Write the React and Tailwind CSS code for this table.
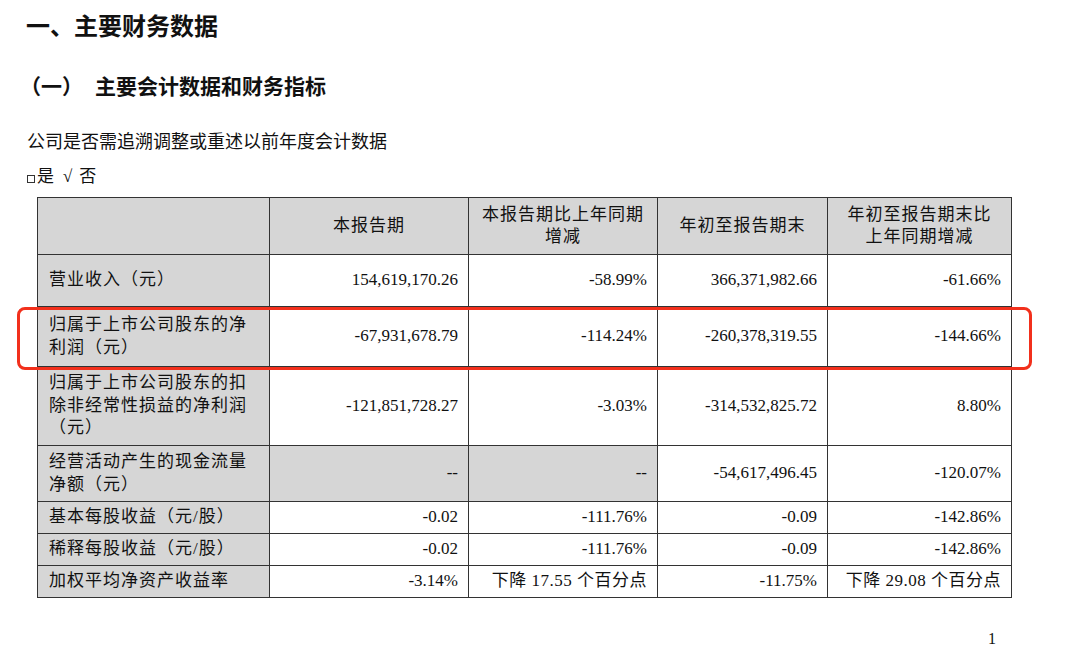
const rows = [
  { label: ['营业收入（元）'], h: 'h-[52px]', vals: ['154,619,170.26', '-58.99%', '366,371,982.66', '-61.66%'] },
  { label: ['归属于上市公司股东的净', '利润（元）'], h: 'h-[60px]', vals: ['-67,931,678.79', '-114.24%', '-260,378,319.55', '-144.66%'] },
  { label: ['归属于上市公司股东的扣', '除非经常性损益的净利润', '（元）'], h: 'h-[79px]', vals: ['-121,851,728.27', '-3.03%', '-314,532,825.72', '8.80%'] },
  { label: ['经营活动产生的现金流量', '净额（元）'], h: 'h-[56px]', vals: ['--', '--', '-54,617,496.45', '-120.07%'], grey: [true, true, false, false] },
  { label: ['基本每股收益（元/股）'], h: 'h-[32px]', vals: ['-0.02', '-111.76%', '-0.09', '-142.86%'] },
  { label: ['稀释每股收益（元/股）'], h: 'h-[32px]', vals: ['-0.02', '-111.76%', '-0.09', '-142.86%'] },
  { label: ['加权平均净资产收益率'], h: 'h-[32px]', vals: ['-3.14%', '下降 17.55 个百分点', '-11.75%', '下降 29.08 个百分点'] },
];

const headers = [
  ['本报告期'],
  ['本报告期比上年同期', '增减'],
  ['年初至报告期末'],
  ['年初至报告期末比', '上年同期增减'],
];

function Lines({ lines }) {
  return lines.map((l, i) => (
    <span key={i}>
      {l}
      {i < lines.length - 1 && <br />}
    </span>
  ));
}

export default function App() {
  return (
    <div className="w-[1080px] h-[654px] bg-white text-[#111] overflow-hidden font-['Liberation_Serif','Noto_Sans_CJK_SC',serif]">
      {/* headings */}
      <h1 className="ml-[26px] pt-[9px] text-[24px] leading-[32px] font-bold font-['Noto_Sans_CJK_SC',sans-serif]">
        一、主要财务数据
      </h1>
      <h2 className="mt-[30px] flex text-[21px] leading-[28px] font-bold font-['Noto_Sans_CJK_SC',sans-serif]">
        <span className="ml-[20px]">（一）</span>
        <span className="ml-[12px]">主要会计数据和财务指标</span>
      </h2>
      <p className="mt-[30px] ml-[27px] text-[18px] leading-[26px]">公司是否需追溯调整或重述以前年度会计数据</p>
      <p className="mt-[9px] ml-[27px] flex items-center text-[17px] leading-[26px]">
        <span className="inline-block w-[8px] h-[8px] border border-[#333] mt-[4px]" />
        <span className="ml-[2px]">是</span>
        <span className="ml-[9px]">√</span>
        <span className="ml-[7px]">否</span>
      </p>

      {/* table */}
      <div className="relative mt-[7px] ml-[37px] w-[974px]">
        <table className="table-fixed border-collapse w-[974px] text-[17px] leading-[22.5px]">
          <colgroup>
            <col className="w-[232px]" />
            <col className="w-[199px]" />
            <col className="w-[189px]" />
            <col className="w-[170px]" />
            <col className="w-[184px]" />
          </colgroup>
          <thead>
            <tr className="h-[57px] bg-[#d6d6d6]">
              <th className="border border-[#333]" />
              {headers.map((h, i) => (
                <th key={i} className="border border-[#333] font-normal text-center align-middle px-[2px] tracking-[1px] whitespace-nowrap">
                  <Lines lines={h} />
                </th>
              ))}
            </tr>
          </thead>
          <tbody>
            {rows.map((r, ri) => (
              <tr key={ri} className={r.h}>
                <td className="border border-[#333] bg-[#d6d6d6] pl-[11px] pr-[2px] align-middle text-left tracking-[1px] whitespace-nowrap">
                  <Lines lines={r.label} />
                </td>
                {r.vals.map((v, vi) => (
                  <td
                    key={vi}
                    className={`border border-[#333] pr-[10px] text-right align-middle whitespace-nowrap ${
                      r.grey && r.grey[vi] ? 'bg-[#d6d6d6]' : 'bg-white'
                    } ${v.startsWith('下降') ? 'tracking-[0.5px]' : ''}`}
                  >
                    {v}
                  </td>
                ))}
              </tr>
            ))}
          </tbody>
        </table>
        {/* highlight box */}
        <div className="absolute left-[-20px] top-[110px] w-[1015px] h-[63px] border-[3px] border-[#f2301c] rounded-[8px] pointer-events-none" />
      </div>

      <div className="mt-[31px] flex justify-end pr-[84px] text-[16px] leading-[20px]">1</div>
    </div>
  );
}
